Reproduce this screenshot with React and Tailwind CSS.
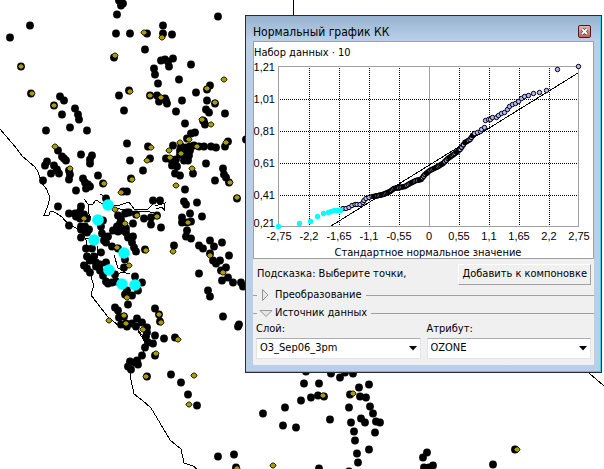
import { useState } from 'react';

// Monitoring stations, [x, y] on the map canvas
const STATIONS = [
  [30, 25], [10, 37], [21, 66], [31, 93], [60, 96], [64, 100], [54, 105], [75, 108], [78, 114], [62, 114],
  [79, 119], [70, 127], [87, 130], [46, 130], [58, 150], [62, 156], [66, 160], [81, 154], [92, 155], [90, 159],
  [119, 0], [123, 3], [121, 5], [117, 14], [116, 33], [130, 33], [147, 33], [145, 49], [114, 57], [119, 95],
  [129, 90], [124, 110], [127, 143], [148, 146], [218, 16], [163, 25], [163, 33], [172, 34], [161, 60], [165, 59],
  [173, 58], [168, 61], [169, 66], [191, 64], [154, 68], [155, 74], [158, 83], [179, 79], [196, 92], [210, 85],
  [207, 89], [150, 95], [157, 95], [160, 98], [165, 98], [159, 101], [166, 100], [167, 103], [182, 100], [207, 100],
  [215, 103], [206, 109], [209, 112], [225, 113], [176, 111], [185, 123], [203, 120], [204, 121], [205, 124],
  [191, 133], [195, 132], [187, 138], [173, 145], [181, 146], [186, 147], [190, 146], [194, 145], [199, 146],
  [204, 146], [211, 146], [216, 147], [225, 146], [228, 141], [246, 139], [180, 150], [186, 152], [180, 154],
  [185, 156], [190, 150], [150, 158], [166, 158], [171, 159], [176, 159], [184, 160], [188, 160], [189, 155],
  [47, 161], [45, 165], [64, 158], [54, 165], [57, 169], [59, 173], [51, 173], [43, 180], [69, 170], [70, 174],
  [69, 179], [90, 163], [98, 175], [103, 183], [83, 178], [85, 182], [88, 184], [90, 186], [86, 188], [76, 190],
  [58, 206], [81, 206], [69, 213], [75, 213], [80, 211], [84, 214], [87, 218], [80, 218], [76, 216], [69, 225],
  [81, 226], [85, 226], [89, 229], [85, 231], [81, 229], [81, 237], [87, 232], [106, 198], [130, 160], [143, 170],
  [131, 178], [123, 191], [127, 191], [86, 248], [92, 248], [87, 256], [94, 256], [90, 260], [96, 262], [100, 264],
  [84, 265], [87, 268], [90, 272], [101, 252], [106, 262], [96, 266], [100, 270], [103, 275], [106, 281], [108, 283],
  [112, 282], [115, 274], [124, 267], [112, 246], [118, 248], [125, 259], [104, 240], [108, 236], [102, 233],
  [101, 226], [103, 220], [106, 242], [113, 230], [118, 231], [117, 226], [118, 215], [121, 219], [120, 223],
  [126, 228], [123, 230], [128, 237], [127, 212], [127, 290], [125, 294], [128, 304], [115, 307], [116, 281],
  [172, 165], [177, 166], [175, 173], [180, 175], [193, 173], [206, 163], [215, 180], [223, 168], [224, 174],
  [226, 177], [229, 182], [237, 198], [185, 189], [184, 201], [186, 204], [197, 202], [202, 216], [190, 213],
  [182, 217], [182, 222], [187, 222], [191, 221], [153, 200], [160, 200], [129, 212], [136, 214], [144, 218],
  [151, 217], [157, 215], [151, 224], [161, 227], [133, 223], [125, 213], [126, 232], [130, 237], [133, 236],
  [132, 242], [134, 247], [136, 251], [145, 249], [174, 245], [187, 230], [186, 236], [191, 238], [199, 245],
  [203, 248], [210, 240], [214, 246], [222, 242], [210, 253], [213, 260], [216, 263], [220, 260], [229, 255],
  [199, 273], [221, 270], [226, 267], [222, 280], [228, 277], [233, 282], [241, 282], [243, 286], [208, 290],
  [210, 296], [135, 276], [142, 282], [138, 290], [132, 295], [155, 308], [118, 310], [119, 317], [124, 316],
  [121, 324], [127, 326], [126, 323], [132, 323], [137, 318], [142, 322], [136, 326], [147, 327], [147, 332],
  [146, 336], [148, 342], [153, 343], [145, 347], [155, 335], [164, 338], [175, 337], [159, 314], [160, 321],
  [142, 355], [137, 360], [130, 361], [135, 362], [128, 366], [131, 369], [138, 364], [155, 355], [147, 376],
  [171, 374], [181, 382], [188, 394], [197, 405], [223, 316], [239, 324], [238, 326], [218, 456], [234, 454],
  [236, 467], [306, 371], [331, 373], [340, 377], [345, 372], [353, 373], [304, 383], [319, 383], [301, 400],
  [311, 397], [318, 395], [324, 396], [359, 387], [369, 384], [350, 394], [360, 396], [366, 397], [285, 407],
  [263, 413], [283, 425], [296, 427], [330, 419], [349, 407], [370, 406], [373, 413], [361, 418], [365, 422],
  [376, 421], [380, 422], [351, 422], [375, 432], [354, 431], [355, 440], [369, 449], [357, 453], [358, 462],
  [319, 468], [349, 471], [427, 452], [423, 457], [424, 467], [429, 467], [433, 465], [515, 449], [493, 464],
];

const CITIES = [
  [21, 66], [32, 93], [54, 105], [55, 146], [144, 32], [115, 55], [130, 91], [162, 37], [207, 88], [150, 95],
  [161, 97], [215, 102], [202, 119], [211, 124], [189, 139], [180, 142], [151, 147], [169, 150], [197, 146],
  [226, 142], [181, 153], [147, 160], [170, 157], [224, 79], [70, 168], [104, 183], [121, 192], [84, 218],
  [117, 247], [125, 223], [127, 297], [115, 209], [192, 168], [230, 182], [237, 197], [176, 185], [188, 222],
  [132, 179], [137, 215], [157, 216], [146, 250], [173, 251], [210, 255], [223, 272], [129, 265], [124, 315],
  [109, 320], [126, 323], [143, 329], [178, 339], [159, 314], [161, 322], [156, 353], [146, 376], [194, 375],
  [189, 404], [237, 468], [323, 395], [353, 393], [273, 465], [517, 449],
];

const SELECTED = [[108, 205], [98, 220], [94, 240], [124, 253], [109, 270], [122, 284], [135, 285]];

const BORDERS = [
  'M0 129 17 149 22 156 35 167 38 172 42 183 47 190 50 198 47 208 44 215 49 215 50 212 52 211 56 213 62 217 68 224 76 228 82 233 86 240 86 260 90 273 93 283 93 288 91 295 97 303 108 317 119 326 136 327 147 342 142 355 130 370 131 380 134 394 142 400 151 408 160 423 170 440 181 449 184 463 193 466 197 469',
  'M84 199 88 204 93 204 96 200 101 203 108 207 120 205 129 202 134 209 147 210 152 205 154 200',
  'M88 204 88 212 91 218M100 194 105 197 108 203',
  'M116 208 133 212 147 211 157 214M155 206 165 203 164 210M156 209 162 207 165 211',
  'M85 238 92 238M97 246 97 258M114 255 118 268 128 274M117 275 122 272 130 274',
  'M138 331 145 342M293 0 293 15M589 373 604 386',
];

const SELECTED_VALUES = [
  [278, 226], [299, 223], [310, 221], [317, 216], [323, 213], [328, 212], [331, 211], [334, 210], [337, 210], [340, 210],
];

const LOW_VALUES = [
  [343, 208], [346, 208], [349, 207], [352, 205], [355, 204], [357, 204], [360, 204], [363, 202], [364, 200],
  [366, 198], [369, 197], [372, 196], [374, 196],
];

// The middle of the curve is too crowded to list value by value
const CURVE = [
  [374, 196], [383, 194], [390, 191], [394, 188], [405, 186], [410, 183], [416, 180], [421, 179], [425, 174],
  [430, 170], [436, 167], [443, 163], [448, 158], [455, 153], [460, 149], [465, 142], [470, 139], [474, 133],
];

const HIGH_VALUES = [
  [474, 133], [477, 132], [480, 131], [481, 129], [484, 127], [485, 120], [488, 119], [490, 119], [492, 117],
  [496, 117], [498, 115], [501, 113], [504, 112], [507, 109], [509, 106], [512, 104], [515, 103], [518, 101],
  [521, 98], [524, 96], [528, 95], [533, 93], [539, 92], [546, 90], [557, 69], [578, 66],
];

const middleValues = CURVE.slice(1).flatMap(([x2, y2], i) => {
  const [x1, y1] = CURVE[i];
  const steps = Math.max(1, Math.round((x2 - x1) / 1.5));
  return Array.from({ length: steps }, (_, n) => [
    x1 + ((x2 - x1) * n) / steps,
    y1 + ((y2 - y1) * n) / steps,
  ]);
});

const X_TICKS = ['-2,75', '-2,2', '-1,65', '-1,1', '-0,55', '0', '0,55', '1,1', '1,65', '2,2', '2,75'];
const Y_TICKS = [
  ['1,21', 71],
  ['1,01', 103],
  ['0,81', 135],
  ['0,61', 167],
  ['0,41', 199],
  ['0,21', 227],
];

const StationMap = () => (
  <svg
    className="absolute top-0 left-0"
    width="604"
    height="469"
    viewBox="0 0 604 469"
    aria-hidden="true"
  >
    {BORDERS.map((d) => (
      <path key={d} d={d} fill="none" stroke="#000" shapeRendering="crispEdges" />
    ))}
    {STATIONS.map(([x, y], i) => (
      <circle key={i} cx={x} cy={y + 0.5} r="3.9" />
    ))}
    {CITIES.map(([x, y], i) => (
      <path
        key={i}
        d={`M${x - 1} ${y - 2}h2l2 2v1l-2 2h-2l-2-2v-1z`}
        fill="#a89b00"
        stroke="#000"
        strokeWidth="0.8"
      />
    ))}
    {SELECTED.map(([x, y], i) => (
      <circle key={i} cx={x} cy={y} r="5.8" fill="#00ffff" />
    ))}
  </svg>
);

const QQPlot = () => (
  <svg className="block w-full" viewBox="254 62 339 196" role="img">
    <g stroke="#000" strokeDasharray="1 1" shapeRendering="crispEdges">
      {[1, 2, 3, 4, 6, 7, 8, 9].map((n) => (
        <path key={n} d={`M${279.5 + n * 30 - 0.5} 68V226`} />
      ))}
      {[1, 2, 3, 4].map((n) => (
        <path key={n} d={`M280 ${67.5 + n * 32}H578`} />
      ))}
    </g>
    <path
      d="M278.5 66.5H578.5V226.5H278.5ZM429.5 66.5V226.5"
      fill="none"
      stroke="#a0a0a0"
      shapeRendering="crispEdges"
    />
    <path d="M331 226 578 73" stroke="#000" shapeRendering="crispEdges" />
    <g fill="#b8b8ff" stroke="#000">
      {LOW_VALUES.map(([x, y], i) => (
        <circle key={i} cx={x} cy={y + 0.5} r="2.2" />
      ))}
      {middleValues.map(([x, y], i) => (
        <circle
          key={i}
          cx={x}
          cy={y + 0.5}
          r="2.2"
          strokeWidth="1.2"
          className={i % 5 < 2 ? 'fill-black' : undefined}
        />
      ))}
      {HIGH_VALUES.map(([x, y], i) => (
        <circle key={i} cx={x + 0.5} cy={y + 0.5} r="2.2" />
      ))}
    </g>
    {SELECTED_VALUES.map(([x, y], i) => (
      <circle key={i} cx={x + 0.5} cy={y + 0.5} r="2.7" fill="#00ffff" />
    ))}
    <g className="font-['Liberation_Sans'] text-[11px]">
      {Y_TICKS.map(([label, y]) => (
        <text key={label} x="275" y={y} textAnchor="end">
          {label}
        </text>
      ))}
      {X_TICKS.map((label, i) => (
        <text key={label} x={279 + i * 30} y="240" textAnchor="middle">
          {label}
        </text>
      ))}
    </g>
    <text x="428" y="256" textAnchor="middle" className="text-[11px]">
      Стандартное нормальное значение
    </text>
  </svg>
);

const Section = ({ title, open, onToggle }) => (
  <button onClick={onToggle} aria-expanded={open} className="flex h-[18px] w-full items-center gap-[2px]">
    <span className="h-px w-1 bg-[#a0a0a0]" />
    <svg width="14" height="14" viewBox="0 0 14 14" fill="#e6e6e6" stroke="#969696">
      {open ? <path d="M1 4.5H13L7 10.5Z" /> : <path d="M3.5 1.5V12.5L9 7Z" />}
    </svg>
    <span>{title}</span>
    <span className="ml-[2px] h-px flex-1 bg-[#a0a0a0]" />
  </button>
);

const Field = ({ id, label, options }) => (
  <div className="min-w-0 flex-1">
    <label htmlFor={id} className="block h-[16px] leading-[14px]">
      {label}
    </label>
    <div className="relative">
      <select
        id={id}
        className="block h-[21px] w-full appearance-none border border-[#e0e3ea] border-t-[#abadb3] bg-white px-[3px]"
      >
        {options.map((option) => (
          <option key={option}>{option}</option>
        ))}
      </select>
      <svg className="pointer-events-none absolute top-2 right-1" width="8" height="5" viewBox="0 0 8 5">
        <path d="M0 0H8L4 4.5Z" />
      </svg>
    </div>
  </div>
);

const App = () => {
  const [transformOpen, setTransformOpen] = useState(false);
  const [sourceOpen, setSourceOpen] = useState(true);

  return (
    <main className="relative min-h-screen overflow-hidden bg-white font-['DejaVu_Sans_Condensed','DejaVu_Sans',sans-serif] text-[11px] text-black">
      <StationMap />

      {/* Plot window */}
      <section className="absolute top-[15px] right-[2px] left-[245px] border border-[#2b2b33] bg-[#b9cfe8]">
        <div className="border-r border-b border-r-[#35d3ee] border-b-[#35d3ee] bg-linear-to-b from-[#98b3d0] to-[#b9cfe8] to-[24px] pr-[6px] pb-[6px] pl-[7px]">
          <header className="flex h-[25px] items-center justify-between pt-[6px] pr-[3px]">
            <h1 className="text-[12px] leading-4">Нормальный график КК</h1>
            <button
              aria-label="Закрыть"
              className="flex h-[13px] w-[13px] items-center justify-center rounded-xs border border-[#4c1c26] bg-linear-to-b from-[#e9b5a8] to-[#c4604c]"
            >
              <svg width="9" height="9" viewBox="0 0 9 9" fill="none">
                <path d="M2 2 7 7M7 2 2 7" stroke="#40506a" strokeWidth="3.4" />
                <path d="M2 2 7 7M7 2 2 7" stroke="#fff" strokeWidth="1.8" />
              </svg>
            </button>
          </header>

          <div className="bg-[#f0f0f0]">
            <div className="border border-[#a0a0a0] bg-white">
              <h2 className="h-5 leading-[22px]">Набор данных · 10</h2>
              <QQPlot />
            </div>

            <div className="flex items-center justify-between pt-[5px] pr-[3px] pb-[1px] pl-1">
              <p>Подсказка: Выберите точки,</p>
              <button className="h-[21px] border border-white border-r-[#a0a0a0] border-b-[#a0a0a0] px-[3px] whitespace-nowrap">
                Добавить к компоновке
              </button>
            </div>

            <Section
              title="Преобразование"
              open={transformOpen}
              onToggle={() => setTransformOpen(!transformOpen)}
            />
            <Section title="Источник данных" open={sourceOpen} onToggle={() => setSourceOpen(!sourceOpen)} />

            {sourceOpen && (
              <div className="flex gap-[6px] px-[3px] pb-[6px]">
                <Field id="layer" label="Слой:" options={['O3_Sep06_3pm']} />
                <Field id="attribute" label="Атрибут:" options={['OZONE']} />
              </div>
            )}
          </div>
        </div>
      </section>
    </main>
  );
};

export default App;
